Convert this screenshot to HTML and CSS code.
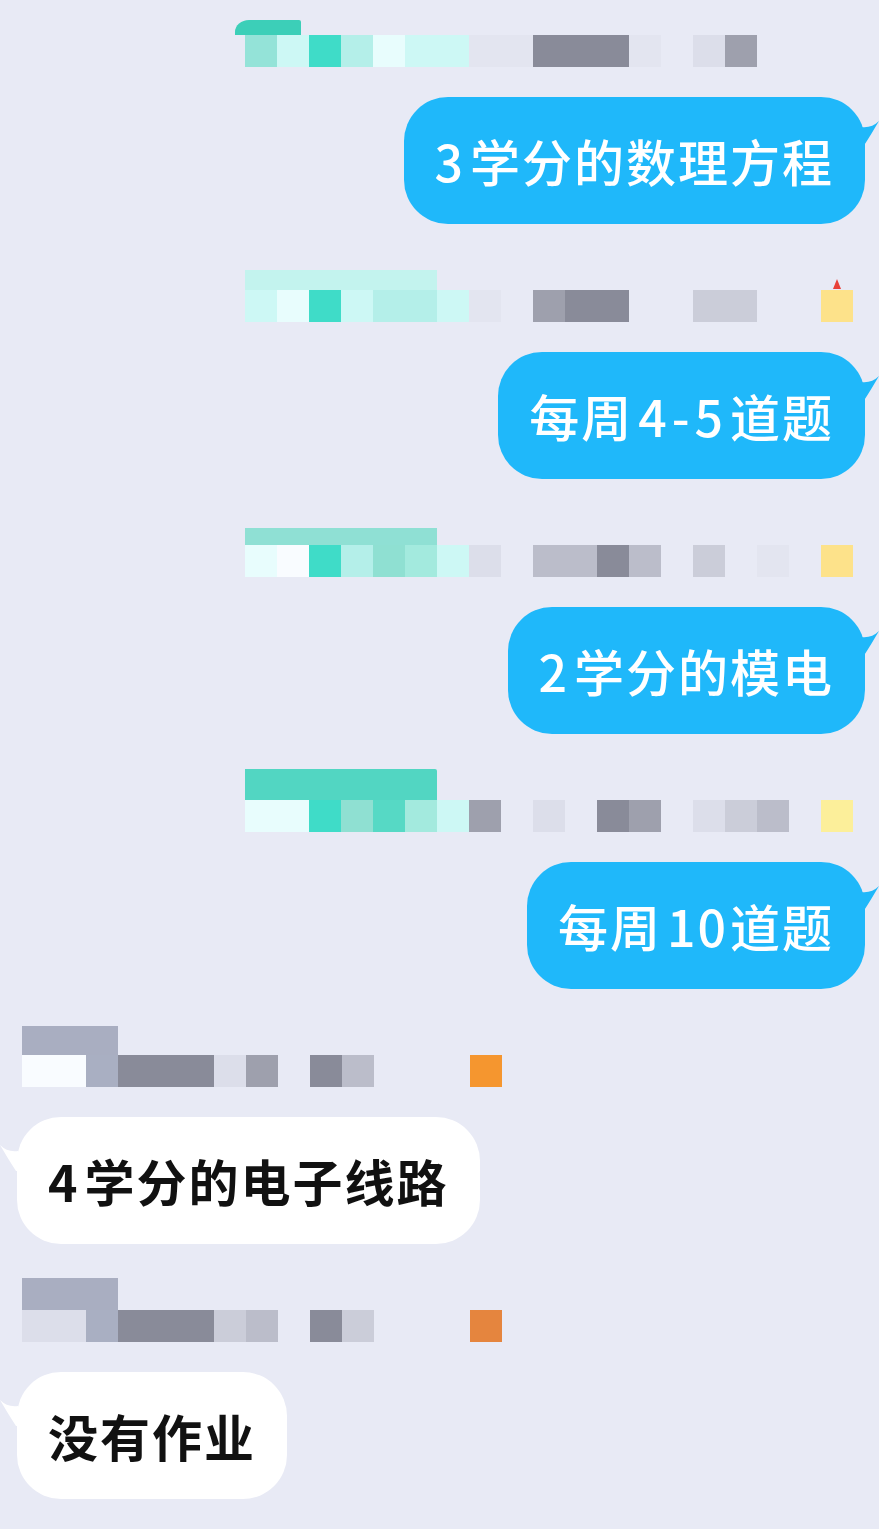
FILE: index.html
```html
<!DOCTYPE html>
<html lang="zh-CN">
<head>
<meta charset="utf-8">
<title>聊天</title>
<link rel="stylesheet" href="styles.css">
</head>
<body>
<div class="chat">

  <div class="msg out">
    <div class="meta">
      <div class="strip hook"></div>
      <div class="cells">
        <span class="cell ta"></span><span class="cell t4"></span><span class="cell t1"></span><span class="cell t3"></span><span class="cell t5"></span><span class="cell t4"></span><span class="cell t4"></span><span class="cell g6"></span><span class="cell g6"></span><span class="cell g1"></span><span class="cell g1"></span><span class="cell g1"></span><span class="cell g6"></span><span class="cell"></span><span class="cell g5"></span><span class="cell g2"></span><span class="cell"></span><span class="cell"></span><span class="cell"></span>
      </div>
    </div>
    <div class="bubble blue"><span class="num">3</span>学分的数理方程<svg class="tail" viewBox="0 0 18 26"><path d="M0 6 C7 7 13 5 18 0 C13 8 8 17 2 26 L0 26 Z"/></svg></div>
  </div>

  <div class="msg out">
    <div class="meta">
      <div class="strip s2"></div>
      <div class="cells">
        <span class="cell t4"></span><span class="cell t5"></span><span class="cell t1"></span><span class="cell t4"></span><span class="cell t3"></span><span class="cell t3"></span><span class="cell t4"></span><span class="cell g6"></span><span class="cell"></span><span class="cell g2"></span><span class="cell g1"></span><span class="cell g1"></span><span class="cell"></span><span class="cell"></span><span class="cell g4"></span><span class="cell g4"></span><span class="cell"></span><span class="cell"></span><span class="cell y badge"></span>
      </div>
    </div>
    <div class="bubble blue">每周<span class="num lead">4-5</span>道题<svg class="tail" viewBox="0 0 18 26"><path d="M0 6 C7 7 13 5 18 0 C13 8 8 17 2 26 L0 26 Z"/></svg></div>
  </div>

  <div class="msg out">
    <div class="meta">
      <div class="strip s3"></div>
      <div class="cells">
        <span class="cell t5"></span><span class="cell w"></span><span class="cell t1"></span><span class="cell t3"></span><span class="cell t2"></span><span class="cell tb"></span><span class="cell t4"></span><span class="cell g5"></span><span class="cell"></span><span class="cell g3"></span><span class="cell g3"></span><span class="cell g1"></span><span class="cell g3"></span><span class="cell"></span><span class="cell g4"></span><span class="cell"></span><span class="cell g6"></span><span class="cell"></span><span class="cell y"></span>
      </div>
    </div>
    <div class="bubble blue"><span class="num">2</span>学分的模电<svg class="tail" viewBox="0 0 18 26"><path d="M0 6 C7 7 13 5 18 0 C13 8 8 17 2 26 L0 26 Z"/></svg></div>
  </div>

  <div class="msg out">
    <div class="meta">
      <div class="strip s4"></div>
      <div class="cells">
        <span class="cell t5"></span><span class="cell t5"></span><span class="cell t1"></span><span class="cell t2"></span><span class="cell tc"></span><span class="cell tb"></span><span class="cell t4"></span><span class="cell g2"></span><span class="cell"></span><span class="cell g5"></span><span class="cell"></span><span class="cell g1"></span><span class="cell g2"></span><span class="cell"></span><span class="cell g5"></span><span class="cell g4"></span><span class="cell g3"></span><span class="cell"></span><span class="cell y2"></span>
      </div>
    </div>
    <div class="bubble blue">每周<span class="num lead tight">10</span>道题<svg class="tail" viewBox="0 0 18 26"><path d="M0 6 C7 7 13 5 18 0 C13 8 8 17 2 26 L0 26 Z"/></svg></div>
  </div>

  <div class="msg in">
    <div class="meta">
      <div class="strip sl"></div>
      <div class="cells">
        <span class="cell w"></span><span class="cell w"></span><span class="cell b"></span><span class="cell g1"></span><span class="cell g1"></span><span class="cell g1"></span><span class="cell g5"></span><span class="cell g2"></span><span class="cell"></span><span class="cell g1"></span><span class="cell g3"></span><span class="cell"></span><span class="cell"></span><span class="cell"></span><span class="cell o"></span>
      </div>
    </div>
    <div class="bubble white"><span class="num">4</span>学分的电子线路<svg class="tail" viewBox="0 0 18 26"><path d="M0 6 C7 7 13 5 18 0 C13 8 8 17 2 26 L0 26 Z"/></svg></div>
  </div>

  <div class="msg in">
    <div class="meta">
      <div class="strip sl2"></div>
      <div class="cells">
        <span class="cell g5"></span><span class="cell g5"></span><span class="cell b"></span><span class="cell g1"></span><span class="cell g1"></span><span class="cell g1"></span><span class="cell g4"></span><span class="cell g3"></span><span class="cell"></span><span class="cell g1"></span><span class="cell g4"></span><span class="cell"></span><span class="cell"></span><span class="cell"></span><span class="cell o2"></span>
      </div>
    </div>
    <div class="bubble white">没有作业<svg class="tail" viewBox="0 0 18 26"><path d="M0 6 C7 7 13 5 18 0 C13 8 8 17 2 26 L0 26 Z"/></svg></div>
  </div>

</div>
</body>
</html>
```
FILE: styles.css
```css
html, body {
  margin: 0;
  padding: 0;
}

body {
  background: #e8eaf5;
  font-family: "Noto Sans CJK SC", "Noto Sans", sans-serif;
  width: 879px;
  min-height: 1529px;
  overflow: hidden;
}

.chat {
  display: flex;
  flex-direction: column;
}

.msg {
  display: flex;
  flex-direction: column;
  height: 255px;
}

.msg.out {
  align-items: flex-end;
  padding-right: 14px;
}

.msg.in {
  align-items: flex-start;
  padding-left: 17px;
}

/* pixelated name / title row */
.meta {
  height: 67px;
  margin-bottom: 30px;
  display: flex;
  flex-direction: column;
  justify-content: flex-end;
  align-items: flex-start;
}

.out .meta {
  width: 608px;
  margin-right: 12px;
}

.in .meta {
  width: 480px;
  margin-left: 5px;
}

.strip {
  flex: none;
}

.hook {
  width: 66px;
  height: 15px;
  margin-left: -10px;
  background: #3ccfb8;
  border-top-left-radius: 14px 12px;
  border-top-right-radius: 2px;
}

.s2 {
  width: 192px;
  height: 20px;
  background: #c3f3ee;
}

.s3 {
  width: 192px;
  height: 17px;
  background: #8fe0d4;
}

.s4 {
  width: 192px;
  height: 31px;
  background: #52d6c2;
  border-top-right-radius: 2px;
}

.sl {
  width: 96px;
  height: 29px;
  background: #a9aec1;
}

.sl2 {
  width: 96px;
  height: 32px;
  background: #a9aec1;
}

.cells {
  display: flex;
  height: 32px;
}

.cell {
  flex: none;
  width: 32px;
  height: 32px;
}

.ta { background: #94e3d8; }
.t1 { background: #3fdcc8; }
.t2 { background: #8fe0d2; }
.tb { background: #a3eade; }
.tc { background: #56d9c5; }
.t3 { background: #b4efe9; }
.t4 { background: #cdf8f5; }
.t5 { background: #e8fdfd; }
.w  { background: #f9fcff; }
.g1 { background: #898b99; }
.g2 { background: #9ea0ad; }
.g3 { background: #bbbdca; }
.g4 { background: #cbcdd9; }
.g5 { background: #dcdeea; }
.g6 { background: #e3e5f0; }
.b  { background: #a9afc2; }
.y  { background: #fde28a; }
.y2 { background: #fcef9a; }
.o  { background: #f5962f; }
.o2 { background: #e5853e; }

.badge {
  position: relative;
}

.badge::after {
  content: "";
  position: absolute;
  top: -11px;
  left: 12px;
  width: 0;
  height: 0;
  border-left: 4px solid transparent;
  border-right: 4px solid transparent;
  border-bottom: 10px solid #e8413a;
}

/* bubbles */
.bubble {
  position: relative;
  box-sizing: border-box;
  height: 127px;
  display: flex;
  align-items: center;
  padding: 0 31px 2px 31px;
  border-radius: 44px;
  font-size: 50px;
  font-weight: 500;
  letter-spacing: 2px;
  white-space: nowrap;
}

.num {
  letter-spacing: 5px;
  margin-right: 2px;
}

.num.lead {
  margin-left: 5px;
}

.num.tight {
  letter-spacing: 2px;
}

.bubble.blue {
  background: #1fb8fa;
  color: #ffffff;
}

.bubble.white {
  background: #ffffff;
  color: #111111;
  font-weight: 600;
}

.tail {
  position: absolute;
  top: 24px;
  width: 18px;
  height: 26px;
}

.blue .tail {
  right: -14px;
  fill: #1fb8fa;
}

.white .tail {
  left: -17px;
  top: 28px;
  fill: #ffffff;
  transform: scaleX(-1);
}
```
